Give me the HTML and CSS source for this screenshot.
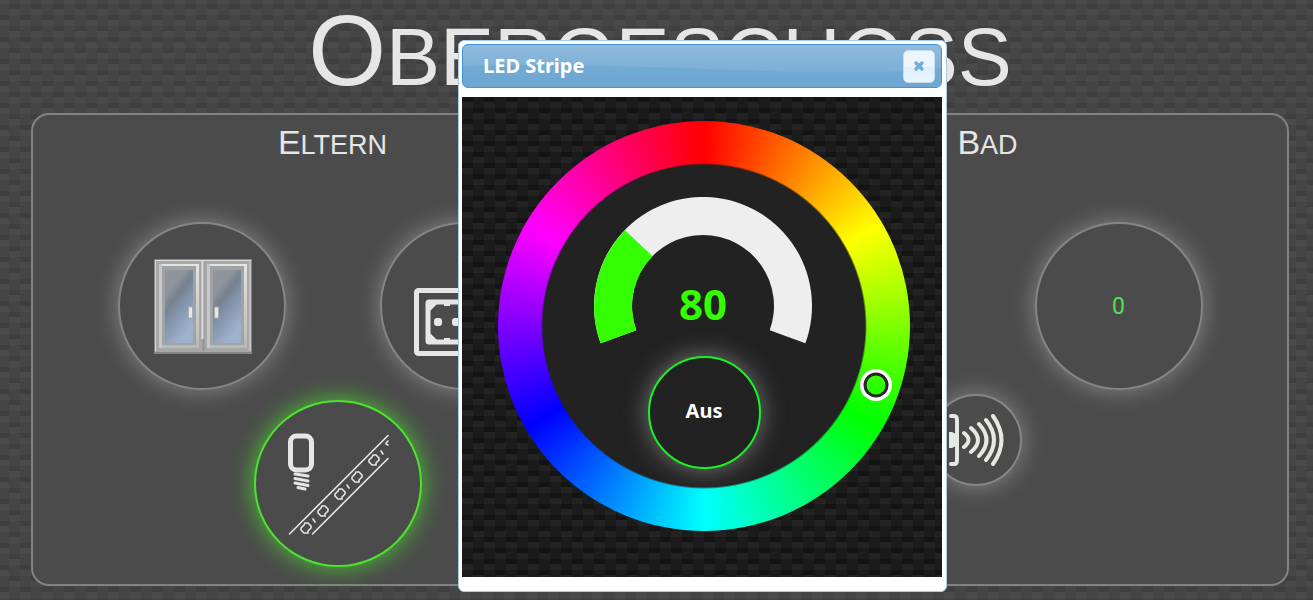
FILE: index.html
```
<!DOCTYPE html>
<html lang="de">
<head>
<meta charset="utf-8">
<title>Obergeschoss</title>
<link rel="stylesheet" href="styles.css">
</head>
<body>
<main class="page">
  <h1 class="page-title">Obergeschoss</h1>
  <div class="panel">
    <section class="room">
      <h2 class="room-title">Eltern</h2>
      <div class="row">
        <button class="round" type="button" aria-label="Fenster">
          <svg width="102" height="95" viewBox="-3 0 102 95">
            <defs>
              <linearGradient id="glass" x1="0" y1="0" x2="0.5" y2="1">
                <stop offset="0" stop-color="#969696"/><stop offset=".28" stop-color="#8d959f"/><stop offset=".45" stop-color="#76818f"/><stop offset=".6" stop-color="#8090a6"/><stop offset="1" stop-color="#9fb2ce"/>
              </linearGradient>
              <linearGradient id="frame" x1="0" y1="0" x2="0" y2="1">
                <stop offset="0" stop-color="#e4e4e4"/><stop offset="1" stop-color="#b9b9b9"/>
              </linearGradient>
              <g id="sash">
                <rect width="40" height="84" fill="url(#frame)"/>
                <rect width="3" height="84" fill="#c8c8c8"/>
                <rect x="3" y="2" width="34" height="79" fill="#9fa4a6"/>
                <rect x="6" y="6" width="28" height="73" fill="url(#glass)"/>
              </g>
            </defs>
            <rect width="98" height="95" fill="#858585"/>
            <rect x="1" y="1" width="96" height="92" fill="#a9a8a8"/>
            <path d="M1 1.500H97M1.500 1V92M96 1V92" stroke="#dadada" fill="none"/>
            <path d="M49.500 2V92" stroke="#959292" stroke-width="2"/>
            <path d="M48.500 2V80" stroke="#dedede" stroke-width="2"/>
            <use href="#sash" x="5" y="5"/><use href="#sash" x="53" y="5"/>
            <path d="M34.500 48h4v11h-4zM60.500 48h4v11h-4z" fill="#e8e8e8" stroke="#acacac"/>
          </svg>
        </button>
        <button class="round" type="button" aria-label="Steckdose">
          <svg class="socket" width="102" height="68" viewBox="0 0 102 68" fill="none" stroke="#e6e6e6">
            <rect x="3.500" y="2.500" width="96" height="63" rx="2" stroke-width="5"/>
            <rect x="15" y="14" width="73" height="40" rx="1" stroke-width="5"/>
            <path d="M16 15h9l-9 9zM16 53h9l-9-9z" fill="#e6e6e6" stroke="none"/>
            <path d="M31 16h6M31 52h6" stroke-width="4"/>
            <rect x="21" y="30" width="8" height="8" rx="3" fill="#e6e6e6" stroke="none"/>
            <rect x="39" y="30" width="8" height="8" rx="3" fill="#e6e6e6" stroke="none"/>
          </svg>
        </button>
      </div>
      <div class="row row-lamp">
        <button class="round round-on" type="button" aria-label="LED Stripe">
          <svg width="102" height="102" viewBox="-1 0 102 102" fill="none" stroke="#e6e6e6" stroke-linecap="round">
            <rect x="2.500" y="3" width="21" height="34" rx="6" stroke-width="5"/>
            <path d="M7 41l13 2M7 45.500l13 2.500M7 50l13 2.500M10 54.500l7 1.500" stroke-width="3"/>
            <path d="M1.500 101L100 2.500M24.500 101L100 25.500" stroke-width="1.600"/>
            <defs>
              <path id="led" d="M-1-5H2L5-2V0L2 3V5H-2L-5 2V0L-2-3Z"/>
            </defs>
            <g stroke-width="1.600">
              <use href="#led" x="18" y="95"/><use href="#led" x="35" y="78"/><use href="#led" x="52" y="61"/><use href="#led" x="69" y="44"/><use href="#led" x="86" y="27"/>
              <path d="M25 86l2 3M59 52l2 3M93 18l2 3M100 8l-2 2M98 11l2 1"/>
            </g>
          </svg>
        </button>
      </div>
    </section>
    <section class="room">
      <h2 class="room-title">Bad</h2>
      <div class="row">
        <button class="round round-value" type="button">0</button>
      </div>
      <div class="row row-sensor">
        <button class="round round-small" type="button" aria-label="Bewegungsmelder">
          <svg width="56" height="56" viewBox="-1 0 56 56" fill="none" stroke="#e6e8e3" stroke-width="4" stroke-linecap="round">
            <path d="M2 4h3q3 0 3 4v40q0 4-3 4H2"/>
            <path d="M0 20h3l4 2v12l-4 2H0z" fill="#e6e8e3" stroke="none"/>
            <path d="M15 21q9 7 0 14M22 16q14 12 0 24M30 12q15 16 0 32M37 8q16 20 0 40M44 4q17 24 0 48"/>
          </svg>
        </button>
      </div>
    </section>
  </div>
</main>

<div class="dialog" role="dialog" aria-labelledby="dialog-title">
  <header class="dialog-bar">
    <svg class="dialog-wave" viewBox="0 0 478 42" preserveAspectRatio="none"><path d="M0 21C150 17 260 27 360 27S450 26 478 23V42H0Z" fill="#6ca6d2" opacity=".7"/></svg>
    <h2 class="dialog-title" id="dialog-title">LED Stripe</h2>
    <button class="dialog-close" type="button" aria-label="Schließen">
      <svg width="12" height="12" viewBox="0 0 12 12"><path d="M3 3l6 6M9 3l-6 6" stroke="#6caedd" stroke-width="3.400" stroke-linecap="round"/></svg>
    </button>
  </header>
  <div class="dialog-body">
    <div class="wheel">
      <div class="gauge">
        <svg width="220" height="147" viewBox="0 0 220 147">
          <path d="M6.600 146.300A109 109 0 1 1 211.400 146.300L175.700 133.300A71 71 0 1 0 42.300 133.300Z" fill="#eee"/>
          <path d="M6.600 146.300A109 109 0 0 1 31 33.200L58.500 59.200A71 71 0 0 0 42.300 133.300Z" fill="#3f0"/>
        </svg>
        <input class="gauge-value" type="text" value="80" aria-label="Helligkeit">
      </div>
      <button class="off" type="button">Aus</button>
      <svg class="marker" width="36" height="36" viewBox="0 0 36 36" fill="none"><circle cx="18" cy="18" r="14" stroke="#fff" stroke-width="4"/><circle cx="18" cy="18" r="11" stroke="#262626" stroke-width="3"/></svg>
    </div>
  </div>
</div>
</body>
</html>
```
FILE: styles.css
```
* { box-sizing: border-box; }

/* Woven carbon texture: two 11px columns, shifted by half a tile */
body, .dialog-body {
  background-color: var(--mid);
  background-image:
    conic-gradient(from 90deg at 11px 5px, transparent 75%, var(--dark) 0),
    conic-gradient(from 90deg at 11px 11px, transparent 75%, var(--light) 0),
    conic-gradient(from 90deg at 11px 5px, transparent 75%, var(--dark) 0),
    conic-gradient(from 90deg at 11px 11px, transparent 75%, var(--light) 0);
  background-size: 22px 22px;
}

body {
  --dark: #3f3f3f;
  --light: #4a4a4a;
  --mid: #454545;
  position: relative;
  margin: 0;
  color: #e6e6e6;
  font-family: "Liberation Sans", Arial, sans-serif;
  background-position: 20px 4px, 20px 4px, 9px 15px, 9px 15px;
}

.page {
  min-height: 100vh;
  padding: 0 24px 14px 31px;
}

.page-title {
  margin: 0;
  height: 113px;
  font-size: 81px;
  line-height: 100px;
  font-weight: 400;
  text-align: center;
  text-transform: uppercase;
}
.page-title::first-letter { font-size: 100px; }

.panel {
  display: grid;
  grid-template-columns: 1fr 1fr;
  gap: 56px;
  min-height: 473px;
  border: 2px solid #828282;
  border-radius: 18px;
  background: #4b4b4b;
}

.room-title {
  margin: 9px 0 0;
  height: 98px;
  font-size: 27px;
  line-height: 36px;
  font-weight: 400;
  text-align: center;
  text-transform: uppercase;
}
.room-title::first-letter { font-size: 34px; }

.row {
  display: grid;
  grid-template-columns: 262px 262px;
  justify-content: center;
  justify-items: center;
}
.row-lamp, .row-sensor { grid-template-columns: auto; }
.row-lamp { padding: 10px 0 0 11px; }
.row-sensor { padding: 4px 23px 0 0; }

.round {
  display: grid;
  place-items: center;
  width: 168px;
  height: 168px;
  padding: 0;
  border: 2px solid #858585;
  border-radius: 50%;
  background: #4b4b4b;
  box-shadow: 0 0 25px #888;
}
.round-on { height: 167px; border-color: #4be32f; box-shadow: 0 0 25px #4bc833; }
.round-small { width: 92px; height: 92px; }
.round-value {
  grid-column: 2;
  color: #4de34d;
  font: 23px Roboto, sans-serif;
}
.socket { margin-top: 32px; }

.dialog {
  position: absolute;
  top: 40px;
  left: 458px;
  width: 489px;
  padding: 3px 4px 14px 3px;
  border: 1px solid #a6cce8;
  border-radius: 6px;
  background: #fff;
}

.dialog-bar {
  position: relative;
  display: flex;
  align-items: center;
  justify-content: space-between;
  height: 44px;
  padding: 0 6px 0 20px;
  border: 1px solid #3f94d6;
  border-radius: 6px;
  background: linear-gradient(#8fbadc, #80b1d8 50%, #6ba5d1);
  overflow: hidden;
}
.dialog-wave {
  position: absolute;
  inset: 0;
  width: 100%;
  height: 100%;
}
.dialog-title {
  position: relative;
  margin: 0;
  padding-bottom: 2px;
  color: #fff;
  font: bold 20px "Noto Sans", sans-serif;
}
.dialog-close {
  position: relative;
  display: grid;
  place-items: center;
  width: 32px;
  height: 33px;
  padding: 0;
  border: 1px solid #c5dcef;
  border-radius: 5px;
  background: linear-gradient(#edf5fc 50%, #e0effa 50%, #e9f4fc);
}

.dialog-body {
  --dark: #141414;
  --light: #232323;
  --mid: #1b1b1b;
  height: 480px;
  margin-top: 9px;
  padding: 24px 32px 44px 36px;
  background-position: 11px 0, 11px 0, 0 11px, 0 11px;
}

.wheel {
  position: relative;
  display: flex;
  flex-direction: column;
  align-items: center;
  gap: 12px;
  width: 412px;
  height: 410px;
  padding-top: 76px;
  border-radius: 50%;
  background:
    radial-gradient(circle, #222 161px, transparent 163px),
    conic-gradient(#f00, #ff0, #0f0, #0ff, #00f, #f0f, #f00);
}

.gauge {
  position: relative;
  height: 147px;
}
.gauge-value {
  position: absolute;
  top: 76px;
  left: 49px;
  width: 120px;
  height: 60px;
  padding: 0;
  border: 0;
  background: none;
  color: #3f0;
  font: bold 42px "Noto Sans", sans-serif;
  text-align: center;
}

.off {
  width: 113px;
  height: 113px;
  padding: 0 0 4px;
  border: 2px solid #14f51e;
  border-radius: 50%;
  background: #222;
  box-shadow: 0 0 25px #777;
  color: #fff;
  font: bold 20px "Noto Sans", sans-serif;
}

.marker {
  position: absolute;
  top: 246px;
  left: 360px;
}
```
